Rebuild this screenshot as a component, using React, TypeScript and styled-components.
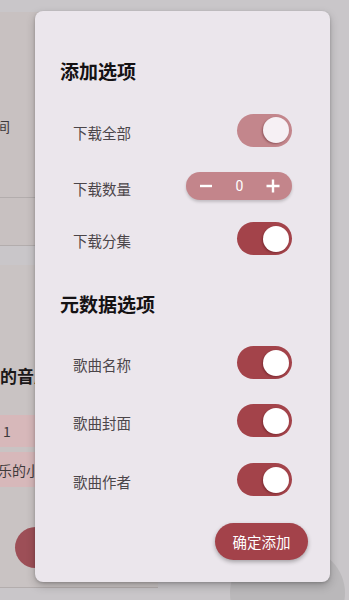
import React from "react";
import styled, { createGlobalStyle } from "styled-components";

const Global = createGlobalStyle`
  html, body { margin: 0; padding: 0; }
  body {
    background: #c9c6c9;
    font-family: "Noto Sans CJK SC", "Noto Sans", sans-serif;
  }
`;

const Screen = styled.div`
  position: relative;
  width: 349px;
  height: 600px;
  overflow: hidden;
  background: #c9c6c9;
`;

/* ---------- dimmed page behind the dialog ---------- */
const BgLayer = styled.div`
  display: flex;
  flex-direction: column;
  width: 349px;
  padding-top: 12px;
  transform: translateX(-150px);
`;

const BgCard = styled.div<{ $tone: string; $h: number; $mt?: number }>`
  margin: ${(p) => p.$mt ?? 0}px 0 0 8px;
  width: 300px;
  height: ${(p) => p.$h}px;
  background: ${(p) => p.$tone};
  display: flex;
  flex-direction: column;
  box-sizing: border-box;
  border-bottom: 1px solid #b3adad;
`;

const BgBlock = styled.div<{ $h: number; $pt: number }>`
  height: ${(p) => p.$h}px;
  padding: ${(p) => p.$pt}px 0 0 68px;
  box-sizing: border-box;
  font-size: 14px;
  line-height: 20px;
  color: #3e3a3b;
`;

const BgDivider = styled.div`
  height: 1px;
  background: #b3adad;
`;

const BgTitle = styled.div`
  padding: 99px 0 0 23px;
  font-size: 17px;
  line-height: 24px;
  font-weight: 700;
  color: #1b1819;
  white-space: nowrap;
`;

const BgRow = styled.div<{ $mt: number; $h: number; $pl: number }>`
  margin-top: ${(p) => p.$mt}px;
  height: ${(p) => p.$h}px;
  background: #d7b8ba;
  display: flex;
  align-items: center;
  padding-left: ${(p) => p.$pl}px;
  font-size: 14px;
  color: #3e3a3b;
  white-space: nowrap;
`;

const BgButton = styled.div`
  margin: 40px 0 0 157px;
  width: 90px;
  height: 41px;
  border-radius: 21px;
  background: #9d4f57;
  color: #f1e4e6;
  font-size: 14px;
  display: flex;
  align-items: center;
  justify-content: center;
`;

const Blob = styled.div`
  position: absolute;
  left: 230px;
  top: 548px;
  width: 115px;
  height: 90px;
  border-radius: 45px;
  background: #bab8ba;
`;

/* ---------- dialog ---------- */
const Dialog = styled.div`
  position: absolute;
  left: 35px;
  top: 11px;
  width: 295px;
  height: 571px;
  box-sizing: border-box;
  background: #ebe6ec;
  border-radius: 8px;
  box-shadow: 0 4px 10px rgba(0, 0, 0, 0.22), 0 1px 3px rgba(0, 0, 0, 0.18);
  padding: 46px 22px 22px 25px;
  display: flex;
  flex-direction: column;
`;

const SectionTitle = styled.div<{ $mt?: number }>`
  margin-top: ${(p) => p.$mt ?? 0}px;
  font-size: 19px;
  line-height: 28px;
  font-weight: 700;
  color: #151214;
`;

const Row = styled.div<{ $mt: number }>`
  margin-top: ${(p) => p.$mt}px;
  height: 48px;
  padding: 0 16px 0 13px;
  display: flex;
  align-items: center;
  justify-content: space-between;
`;

const Label = styled.span`
  font-size: 14.5px;
  line-height: 20px;
  padding-top: 5px;
  color: #4b4549;
`;

const Track = styled.div<{ $muted?: boolean }>`
  width: 55px;
  height: 33px;
  border-radius: 17px;
  box-sizing: border-box;
  padding: 0 3.5px;
  background: ${(p) => (p.$muted ? "#c3868c" : "#a3434a")};
  display: flex;
  align-items: center;
  justify-content: flex-end;
`;

const Knob = styled.div<{ $muted?: boolean }>`
  width: 26px;
  height: 26px;
  border-radius: 50%;
  background: ${(p) => (p.$muted ? "#f6f0f4" : "#ffffff")};
  box-shadow: -1px 1px 2px rgba(60, 0, 10, 0.35);
`;

const Stepper = styled.div`
  width: 106px;
  height: 28px;
  border-radius: 14px;
  box-sizing: border-box;
  padding: 0 12px 0 13px;
  background: #c3858b;
  box-shadow: 0 2px 3px rgba(0, 0, 0, 0.18);
  display: flex;
  align-items: center;
  justify-content: space-between;
  color: #ffffff;
`;

const Count = styled.span`
  font-family: Roboto, "Noto Sans", sans-serif;
  font-size: 14px;
  line-height: 20px;
`;

const Confirm = styled.button`
  margin-top: auto;
  align-self: flex-end;
  width: 93px;
  height: 37px;
  border: none;
  border-radius: 19px;
  background: #a3424a;
  color: #ffffff;
  font-family: inherit;
  font-size: 14.5px;
  padding: 0;
  box-shadow: 0 2px 4px rgba(0, 0, 0, 0.3);
`;

const Toggle = ({ muted }: { muted?: boolean }) => (
  <Track $muted={muted}>
    <Knob $muted={muted} />
  </Track>
);

const Minus = () => (
  <svg width="14" height="14" viewBox="0 0 14 14">
    <path d="M1 7h12" stroke="#fff" strokeWidth="2.4" strokeLinecap="butt" />
  </svg>
);

const Plus = () => (
  <svg width="14" height="14" viewBox="0 0 14 14">
    <path d="M0.5 7h13M7 0.5v13" stroke="#fff" strokeWidth="2.4" />
  </svg>
);

export default function App() {
  return (
    <>
      <Global />
      <Screen>
        <BgLayer>
          <BgCard $tone="#c8c1c1" $h={234}>
            <BgBlock $h={185} $pt={104}>
              显示播放时间
            </BgBlock>
            <BgDivider />
            <BgBlock $h={47} $pt={0} />
          </BgCard>
          <BgCard $tone="#c9c3c3" $h={323} $mt={19}>
            <BgTitle>选择你想要下载的音质</BgTitle>
            <BgRow $mt={27} $h={32} $pl={145}>
              1
            </BgRow>
            <BgRow $mt={5} $h={35} $pl={140}>
              乐的小夜曲
            </BgRow>
            <BgButton>添加</BgButton>
          </BgCard>
        </BgLayer>
        <Blob />
        <Dialog>
          <SectionTitle>添加选项</SectionTitle>
          <Row $mt={21}>
            <Label>下载全部</Label>
            <Toggle muted />
          </Row>
          <Row $mt={8}>
            <Label>下载数量</Label>
            <Stepper>
              <Minus />
              <Count>0</Count>
              <Plus />
            </Stepper>
          </Row>
          <Row $mt={4.5}>
            <Label>下载分集</Label>
            <Toggle />
          </Row>
          <SectionTitle $mt={27.5}>元数据选项</SectionTitle>
          <Row $mt={20.5}>
            <Label>歌曲名称</Label>
            <Toggle />
          </Row>
          <Row $mt={10}>
            <Label>歌曲封面</Label>
            <Toggle />
          </Row>
          <Row $mt={11}>
            <Label>歌曲作者</Label>
            <Toggle />
          </Row>
          <Confirm>确定添加</Confirm>
        </Dialog>
      </Screen>
    </>
  );
}
